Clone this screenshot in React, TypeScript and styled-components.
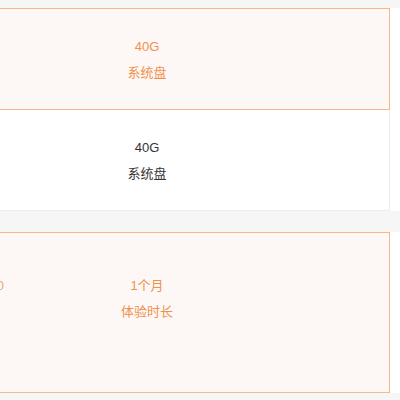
import React from "react";
import styled, { createGlobalStyle } from "styled-components";

const GlobalStyle = createGlobalStyle`
  html, body {
    margin: 0;
    padding: 0;
    background: #f6f6f7;
    font-family: "Liberation Sans", "Noto Sans CJK SC", sans-serif;
    overflow: hidden;
  }
`;

const Page = styled.div`
  display: flex;
  flex-direction: column;
  gap: 21px;
  padding-top: 8px;
  width: 400px;
`;

const Section = styled.section`
  background: #fff;
  padding-right: 10px;
  overflow: hidden;
`;

const OptionList = styled.div`
  display: flex;
  flex-direction: column;
  margin-left: -96px;
`;

const Option = styled.div<{ $active?: boolean; $height: number; $padTop: number }>`
  box-sizing: border-box;
  height: ${({ $height }) => $height}px;
  padding-top: ${({ $padTop }) => $padTop}px;
  display: grid;
  grid-template-columns: 100px 1fr 100px;
  align-items: start;
  background: ${({ $active }) => ($active ? "#fdf8f5" : "#fff")};
  border: 1px solid ${({ $active }) => ($active ? "#f8b68b" : "#ececec")};
  border-top-color: ${({ $active }) => ($active ? "#f8b68b" : "transparent")};
  color: ${({ $active }) => ($active ? "#f0904f" : "#333")};
  font-size: 13px;
  line-height: 26px;
`;

const Side = styled.div`
  text-align: right;
  padding-right: 1px;
  color: #e9a77c;
`;

const Main = styled.div`
  display: flex;
  flex-direction: column;
  align-items: center;
`;

type Spec = {
  value: string;
  label: string;
  active?: boolean;
  height: number;
  padTop: number;
  side?: string;
};

const Card = ({ value, label, active, height, padTop, side }: Spec) => (
  <Option $active={active} $height={height} $padTop={padTop}>
    <Side>{side}</Side>
    <Main>
      <span>{value}</span>
      <span>{label}</span>
    </Main>
    <div />
  </Option>
);

export default function App() {
  return (
    <>
      <GlobalStyle />
      <Page>
        <Section>
          <OptionList>
            <Card value="40G" label="系统盘" active height={102} padTop={25} />
            <Card value="40G" label="系统盘" height={101} padTop={24} />
          </OptionList>
        </Section>
        <Section>
          <OptionList>
            <Card
              value="1个月"
              label="体验时长"
              active
              height={161}
              padTop={40}
              side="¥0"
            />
          </OptionList>
        </Section>
      </Page>
    </>
  );
}
